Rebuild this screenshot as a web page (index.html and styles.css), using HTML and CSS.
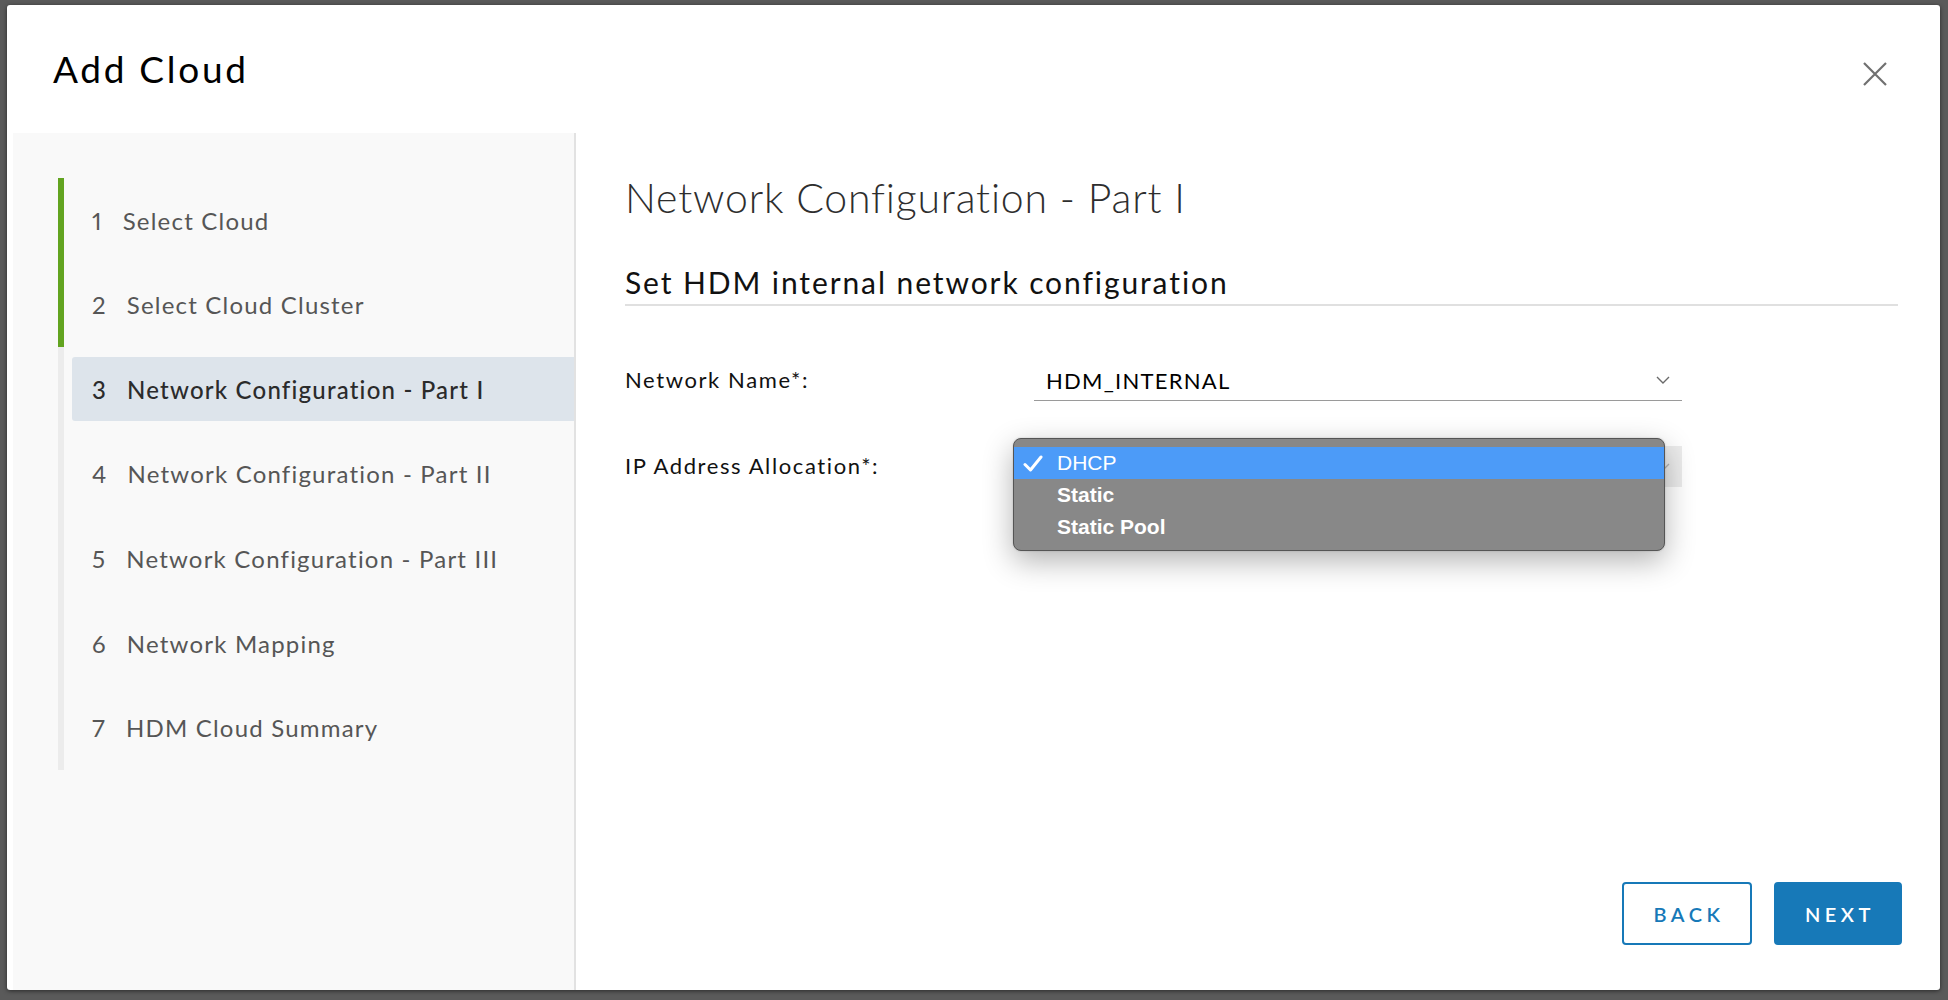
FILE: index.html
```html
<!DOCTYPE html>
<html lang="en">
<head>
<meta charset="utf-8">
<title>Add Cloud</title>
<link rel="stylesheet" href="styles.css">
</head>
<body>
<div class="backdrop">
  <div class="modal">
    <header class="modal-header">
      <h1 class="modal-title">Add Cloud</h1>
      <button class="close-btn" aria-label="Close">
        <svg width="24" height="24" viewBox="0 0 24 24"><path d="M1 1 L23 23 M23 1 L1 23" stroke="#707070" stroke-width="2.2" fill="none"/></svg>
      </button>
    </header>
    <div class="modal-body">
      <nav class="steps">
        <ol class="step-list">
          <li class="step done"><span class="step-inner"><span class="num">1</span><span class="label">Select Cloud</span></span></li>
          <li class="step done"><span class="step-inner"><span class="num">2</span><span class="label">Select Cloud Cluster</span></span></li>
          <li class="step active"><span class="step-inner"><span class="num">3</span><span class="label">Network Configuration - Part I</span></span></li>
          <li class="step"><span class="step-inner"><span class="num">4</span><span class="label">Network Configuration - Part II</span></span></li>
          <li class="step"><span class="step-inner"><span class="num">5</span><span class="label">Network Configuration - Part III</span></span></li>
          <li class="step"><span class="step-inner"><span class="num">6</span><span class="label">Network Mapping</span></span></li>
          <li class="step"><span class="step-inner"><span class="num">7</span><span class="label">HDM Cloud Summary</span></span></li>
        </ol>
      </nav>
      <section class="content">
        <h2 class="page-title">Network Configuration - Part I</h2>
        <h3 class="section-title">Set HDM internal network configuration</h3>
        <div class="form">
          <div class="row">
            <label class="field-label">Network Name*:</label>
            <div class="select select-line">
              <span class="select-value">HDM_INTERNAL</span>
              <svg class="chevron" width="14" height="8" viewBox="0 0 14 8"><path d="M1 1 L7 7 L13 1" stroke="#6a6a6a" stroke-width="1.4" fill="none"/></svg>
            </div>
          </div>
          <div class="row">
            <label class="field-label">IP Address Allocation*:</label>
            <div class="select select-pressed">
              <span class="select-value"></span>
              <svg class="chevron" width="14" height="8" viewBox="0 0 14 8"><path d="M1 1 L7 7 L13 1" stroke="#b5b5b5" stroke-width="1.4" fill="none"/></svg>
              <ul class="menu">
                <li class="menu-item selected">
                  <svg class="check" width="20" height="17" viewBox="0 0 20 17"><path d="M2 9.5 L7.5 15 L18 2" stroke="#fff" stroke-width="3" fill="none" stroke-linecap="round" stroke-linejoin="round"/></svg>
                  DHCP
                </li>
                <li class="menu-item">Static</li>
                <li class="menu-item">Static Pool</li>
              </ul>
            </div>
          </div>
        </div>
        <footer class="actions">
          <button class="btn btn-outline">BACK</button>
          <button class="btn btn-primary">NEXT</button>
        </footer>
      </section>
    </div>
  </div>
</div>
</body>
</html>
```

FILE: styles.css
```css
html, body {
  margin: 0;
  padding: 0;
  height: 100%;
}

body {
  background: #5a5a5a;
  font-family: Lato, "Open Sans", sans-serif;
  overflow: hidden;
}

.backdrop {
  height: 1000px;
  box-sizing: border-box;
  padding: 5px 8px 10px 7px;
  display: flex;
}

.modal {
  flex: 1;
  background: #fff;
  border-radius: 3px;
  display: flex;
  flex-direction: column;
  box-shadow: 0 1px 4px rgba(0, 0, 0, 0.55);
}

.modal-header {
  height: 128px;
  flex: none;
  box-sizing: border-box;
  display: flex;
  align-items: center;
  justify-content: space-between;
  padding: 0 53px 0 46px;
}

.modal-title {
  margin: 0;
  font-size: 37px;
  font-weight: 400;
  line-height: 1.2;
  color: #000;
  letter-spacing: 2.7px;
}

.close-btn {
  border: 0;
  background: none;
  padding: 0;
  width: 24px;
  height: 24px;
  margin-top: 10px;
  display: flex;
}

.modal-body {
  flex: 1;
  display: flex;
  padding-left: 6px;
  min-height: 0;
}

.steps {
  width: 563px;
  flex: none;
  box-sizing: border-box;
  background: #f9f9f9;
  border-right: 2px solid #e2e2e2;
  padding: 45px 0 0 45px;
}

.step-list {
  list-style: none;
  margin: 0;
  padding: 0;
}

.step {
  height: 84.57px;
  border-left: 6px solid #ececec;
  display: flex;
  align-items: center;
}

.step.done {
  border-left-color: #62a420;
}

.step-inner {
  flex: 1;
  height: 64px;
  margin-left: 8px;
  padding-left: 20px;
  display: flex;
  align-items: center;
  border-radius: 3px 0 0 3px;
  color: #565656;
  font-size: 24px;
  letter-spacing: 1.2px;
  font-variant-numeric: proportional-nums;
}

.step.active .step-inner {
  background: #dde4eb;
  color: #2b2b2b;
  font-weight: 500;
}

.num {
  margin-right: 20px;
}

.content {
  flex: 1;
  display: flex;
  flex-direction: column;
  box-sizing: border-box;
  padding: 40px 38px 45px 49px;
}

.page-title {
  margin: 0;
  font-size: 41px;
  font-weight: 300;
  line-height: 1.2;
  color: #2e2e2e;
  letter-spacing: 0.8px;
}

.section-title {
  margin: 42px 4px 0 0;
  padding-bottom: 4px;
  border-bottom: 2px solid #e0e0e0;
  font-size: 30px;
  font-weight: 400;
  line-height: 1.2;
  color: #111;
  letter-spacing: 1.9px;
}

.form {
  margin-top: 54px;
  display: flex;
  flex-direction: column;
  gap: 45px;
}

.row {
  display: flex;
  align-items: center;
  height: 41px;
}

.field-label {
  width: 409px;
  font-size: 22px;
  color: #111;
  letter-spacing: 1.6px;
  margin-top: -2px;
}

.select {
  width: 648px;
  height: 41px;
  box-sizing: border-box;
  position: relative;
  display: flex;
  align-items: center;
  justify-content: space-between;
  padding: 0 12px;
  font-size: 22px;
  color: #000;
  letter-spacing: 1.25px;
}

.select-line {
  border-bottom: 1px solid #9a9a9a;
}

.select-pressed {
  background: #ececec;
}

.menu {
  position: absolute;
  left: -21px;
  top: -8px;
  width: 652px;
  height: 113px;
  box-sizing: border-box;
  margin: 0;
  padding: 8px 0;
  list-style: none;
  background: #888;
  border: 1px solid #555;
  border-radius: 8px;
  box-shadow: 0 10px 30px rgba(0, 0, 0, 0.3), 0 0 2px rgba(0, 0, 0, 0.2);
  font-family: "Liberation Sans", Arial, sans-serif;
  font-size: 21px;
  letter-spacing: 0;
  color: #fff;
}

.menu-item {
  height: 32px;
  display: flex;
  align-items: center;
  padding-left: 43px;
  font-weight: 700;
  position: relative;
}

.menu-item.selected {
  background: #4c9bf8;
  font-weight: 400;
}

.check {
  position: absolute;
  left: 9px;
  top: 8px;
}

.actions {
  margin-top: auto;
  display: flex;
  justify-content: flex-end;
  gap: 22px;
}

.btn {
  height: 63px;
  box-sizing: border-box;
  border: 2px solid #1779b8;
  border-radius: 4px;
  font-family: Lato, "Open Sans", sans-serif;
  font-size: 20px;
  font-weight: 600;
  letter-spacing: 4.5px;
  padding: 0 0 0 4px;
}

.btn-outline {
  width: 130px;
  background: #fff;
  color: #1779b8;
}

.btn-primary {
  width: 128px;
  background: #1779b8;
  color: #fff;
}
```
